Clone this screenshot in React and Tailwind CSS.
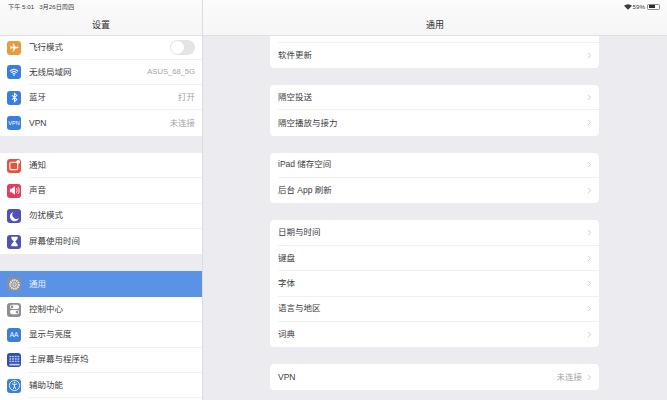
import { ChevronRight } from "lucide-react";

const font = "font-['Liberation_Sans','Noto_Sans_CJK_SC',sans-serif]";

function Plane() {
  return (
    <svg viewBox="0 0 24 24" className="w-[11px] h-[11px] fill-white">
      <path d="M21 12c0-1-1-1.6-2-1.6h-4.6L9.6 3H7.700l2.400 7.400H5.600L4 8.400H2.600L3.600 12l-1 3.600H4l1.600-2h4.500L7.700 21h1.900l4.800-7.400H19c1 0 2-.6 2-1.600z" />
    </svg>
  );
}

function Wifi() {
  return (
    <svg viewBox="0 0 24 24" className="w-[10px] h-[10px] fill-none stroke-white" strokeWidth="2.600" strokeLinecap="round">
      <path d="M3 9.500c5.200-4.600 12.800-4.600 18 0M6.500 13.200c3.200-2.800 7.800-2.800 11 0M9.800 16.600c1.300-1 3.100-1 4.400 0" />
      <circle cx="12" cy="19.600" r="0.600" />
    </svg>
  );
}

function Bluetooth() {
  return (
    <svg viewBox="0 0 24 24" className="w-[11px] h-[11px] fill-none stroke-white" strokeWidth="2.200">
      <path d="M7 7.500l10 9-5 4.500V3l5 4.500-10 9" />
    </svg>
  );
}

function Bell() {
  return (
    <svg viewBox="0 0 14 14" className="w-[13px] h-[13px]">
      <rect x="2" y="3.500" width="8.500" height="8" rx="1.500" fill="none" stroke="white" strokeWidth="1.200" />
      <circle cx="11" cy="3" r="2" fill="white" />
    </svg>
  );
}

function Sound() {
  return (
    <svg viewBox="0 0 14 14" className="w-[13px] h-[13px] fill-white">
      <path d="M2 5h2l3.500-2.700v9.400L4 9H2z" />
      <path d="M9 4.500c1 1.400 1 3.600 0 5M10.800 3.200c1.600 2.200 1.600 5.400 0 7.600" fill="none" stroke="white" strokeWidth="1" />
    </svg>
  );
}

function Moon() {
  return (
    <svg viewBox="0 0 14 14" className="w-[11px] h-[11px] fill-white">
      <path d="M5.500 1.200A6 6 0 1 0 12.800 9 5.400 5.400 0 0 1 5.500 1.200z" />
    </svg>
  );
}

function Hourglass() {
  return (
    <svg viewBox="0 0 14 14" className="w-[11px] h-[11px] fill-white">
      <path d="M3 1h8v1.400c0 1.800-2.200 3.400-3.200 4.600 1 1.200 3.200 2.800 3.200 4.600V13H3v-1.400C3 9.800 5.200 8.200 6.200 7 5.200 5.800 3 4.200 3 2.400z" />
    </svg>
  );
}

function Gear() {
  return (
    <svg viewBox="0 0 14 14" className="w-[13px] h-[13px]">
      <circle cx="7" cy="7" r="4.600" fill="none" stroke="#e8e8ea" strokeWidth="2.200" strokeDasharray="1.600 0.700" />
      <circle cx="7" cy="7" r="1.800" fill="none" stroke="#e8e8ea" strokeWidth="1.100" />
    </svg>
  );
}

function Control() {
  return (
    <svg viewBox="0 0 14 14" className="w-[13px] h-[13px] fill-white">
      <rect x="2" y="2" width="10" height="4.400" rx="2.200" />
      <rect x="2" y="7.600" width="10" height="4.400" rx="2.200" />
      <circle cx="4.300" cy="4.200" r="1.400" fill="#8e8e93" />
      <circle cx="9.700" cy="9.800" r="1.400" fill="#8e8e93" />
    </svg>
  );
}

function HomeGrid() {
  const dots = [];
  for (let y = 0; y < 3; y++) {
    for (let x = 0; x < 4; x++) {
      dots.push(<rect key={`${x}-${y}`} x={1.500 + x * 2.900} y={2 + y * 2.600} width="2" height="1.500" fill="#c5cdf5" />);
    }
  }
  return (
    <svg viewBox="0 0 14 14" className="w-[13px] h-[13px]">
      {dots}
      <rect x="1.500" y="10.400" width="11" height="2" rx="0.600" fill="#c5cdf5" />
    </svg>
  );
}

function Access() {
  return (
    <svg viewBox="0 0 14 14" className="w-[13px] h-[13px] fill-none stroke-white" strokeWidth="0.900">
      <circle cx="7" cy="7" r="5.500" />
      <path d="M4.600 5.300L7 6l2.400-.7M7 6v2.300M7 8.300L5.700 10.600M7 8.300l1.300 2.300" strokeLinecap="round" />
      <circle cx="7" cy="3.800" r="0.500" fill="white" />
    </svg>
  );
}

function Icon({ bg, children }) {
  return (
    <div className={`w-[14px] h-[14px] rounded-[3px] flex items-center justify-center shrink-0 ${bg}`}>
      {children}
    </div>
  );
}

function SideRow({ icon, bg, label, value, small, last, first, active, toggle }) {
  return (
    <div className={`flex items-center pl-[7px] ${first ? "h-[23.700px]" : "h-[25.400px]"} ${active ? "bg-[#5a93e6]" : ""}`}>
      <Icon bg={bg}>{icon}</Icon>
      <div className={`flex-1 h-full flex items-center justify-between ml-[8px] pr-[7px] ${!last && !active ? "border-b border-[#f0f0f2]" : ""}`}>
        <span className={`text-[8.500px] ${active ? "text-[#e6effc]" : "text-[#3a3a3c]"}`}>{label}</span>
        {value && <span className={`${small ? "text-[7.600px]" : "text-[8.500px]"} text-[#a3a3a8]`}>{value}</span>}
        {toggle && (
          <div className="w-[25px] h-[15px] rounded-full bg-[#e4e4e6] flex items-center pl-[1px]">
            <div className="w-[13px] h-[13px] rounded-full bg-white" />
          </div>
        )}
      </div>
    </div>
  );
}

function Card({ rows, className = "" }) {
  return (
    <div className={`bg-white rounded-[4px] ${className}`}>
      {rows.map((r, i) => (
        <div key={r.label} className="h-[25.400px] pl-[8px]">
          <div className={`h-full flex items-center justify-between pr-[5px] ${i < rows.length - 1 ? "border-b border-[#f0f0f2]" : ""}`}>
            <span className="text-[8.500px] text-[#3a3a3c]">{r.label}</span>
            <div className="flex items-center gap-[3px]">
              {r.value && <span className="text-[8.500px] text-[#a3a3a8]">{r.value}</span>}
              <ChevronRight className="w-[9px] h-[9px] text-[#c9c9cd]" strokeWidth={2.500} />
            </div>
          </div>
        </div>
      ))}
    </div>
  );
}

export default function App() {
  return (
    <div className={`w-[667px] h-[400px] overflow-hidden flex bg-[#ebebf0] ${font}`}>
      {/* sidebar */}
      <div className="w-[203px] h-full shrink-0 border-r border-[#dcdcdf] bg-[#ebebf0] overflow-hidden">
        <div className="h-9 bg-gradient-to-b from-[#fbfbfb] to-[#f6f6f7] border-b border-[#e0e0e3] relative flex items-end justify-center pb-[3px]">
          <span className="absolute left-[8px] top-[2px] text-[6.200px] text-[#3a3a3c] flex gap-[5px]">
            <span>下午 5:01</span>
            <span>3月26日周四</span>
          </span>
          <span className="text-[9px] text-[#2c2c2e]">设置</span>
        </div>
        <div className="bg-white">
          <SideRow first bg="bg-[#e79c3c]" icon={<Plane />} label="飞行模式" toggle />
          <SideRow small bg="bg-[#3a7fe0]" icon={<Wifi />} label="无线局域网" value="ASUS_68_5G" />
          <SideRow bg="bg-[#3a7fe0]" icon={<Bluetooth />} label="蓝牙" value="打开" />
          <SideRow last bg="bg-[#3a7fe0]" icon={<span className="text-[5.500px] text-white">VPN</span>} label="VPN" value="未连接" />
        </div>
        <div className="h-[17px]" />
        <div className="bg-white">
          <SideRow bg="bg-[#e2563f]" icon={<Bell />} label="通知" />
          <SideRow bg="bg-[#e23d5b]" icon={<Sound />} label="声音" />
          <SideRow bg="bg-[#5050b8]" icon={<Moon />} label="勿扰模式" />
          <SideRow last bg="bg-[#5050b8]" icon={<Hourglass />} label="屏幕使用时间" />
        </div>
        <div className="h-[17px]" />
        <div className="bg-white pb-3">
          <SideRow active bg="bg-[#8e8e93]" icon={<Gear />} label="通用" />
          <SideRow bg="bg-[#8e8e93]" icon={<Control />} label="控制中心" />
          <SideRow bg="bg-[#3a7fe0]" icon={<span className="text-[6.500px] text-white">AA</span>} label="显示与亮度" />
          <SideRow bg="bg-[#2f4fb8]" icon={<HomeGrid />} label="主屏幕与程序坞" />
          <SideRow bg="bg-[#3a7fe0]" icon={<Access />} label="辅助功能" />
        </div>
      </div>

      {/* detail */}
      <div className="flex-1 min-w-0 h-full overflow-hidden">
        <div className="h-9 bg-gradient-to-b from-[#fbfbfb] to-[#f6f6f7] border-b border-[#e0e0e3] relative flex items-end justify-center pb-[3px]">
          <span className="text-[9px] text-[#2c2c2e]">通用</span>
          <div className="absolute right-[7px] top-[2px] flex items-center gap-[1px]">
            <svg viewBox="0 0 14 10" className="w-[8px] h-[6px] fill-[#3a3a3c]">
              <path d="M7 10L0 3a10 10 0 0 1 14 0z" />
            </svg>
            <span className="text-[6.200px] text-[#3a3a3c]">59%</span>
            <div className="w-[13px] h-[6px] rounded-[1.500px] border border-[#8a8a8e] p-[0.500px] ml-[1px]">
              <div className="w-[6px] h-full bg-[#2c2c2e]" />
            </div>
          </div>
        </div>
        <div className="w-[329px] ml-[67px]">
          <div className="bg-white h-[6.500px] pl-[8px]">
            <div className="h-full border-b border-[#f0f0f2]" />
          </div>
          <Card rows={[{ label: "软件更新" }]} className="rounded-t-none" />
          <Card className="mt-[17px]" rows={[{ label: "隔空投送" }, { label: "隔空播放与接力" }]} />
          <Card className="mt-[17px]" rows={[{ label: "iPad 储存空间" }, { label: "后台 App 刷新" }]} />
          <Card className="mt-[17px]" rows={[{ label: "日期与时间" }, { label: "键盘" }, { label: "字体" }, { label: "语言与地区" }, { label: "词典" }]} />
          <Card className="mt-[17px]" rows={[{ label: "VPN", value: "未连接" }]} />
        </div>
      </div>
    </div>
  );
}
